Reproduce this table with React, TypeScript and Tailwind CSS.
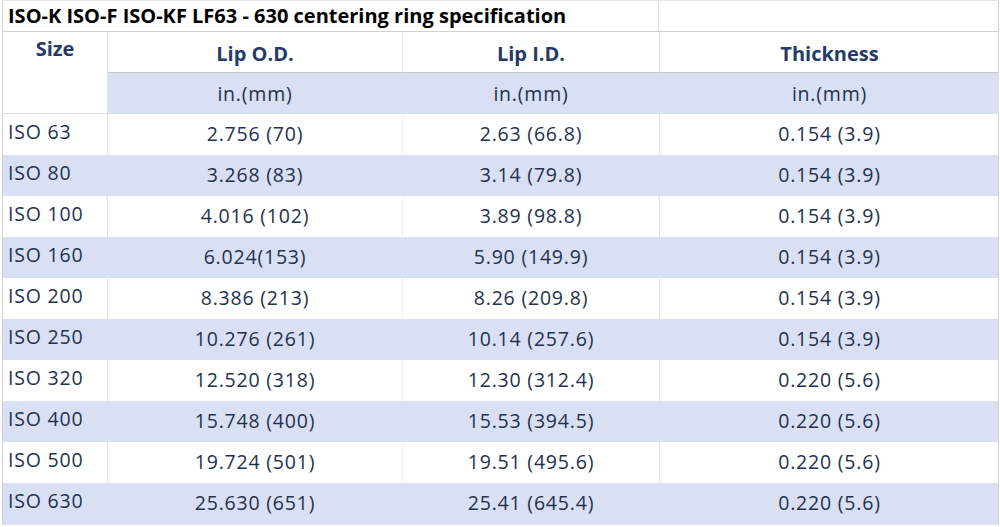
import React from "react";

const rows: [string, string, string, string][] = [
  ["ISO 63", "2.756 (70)", "2.63 (66.8)", "0.154 (3.9)"],
  ["ISO 80", "3.268 (83)", "3.14 (79.8)", "0.154 (3.9)"],
  ["ISO 100", "4.016 (102)", "3.89 (98.8)", "0.154 (3.9)"],
  ["ISO 160", "6.024(153)", "5.90 (149.9)", "0.154 (3.9)"],
  ["ISO 200", "8.386 (213)", "8.26 (209.8)", "0.154 (3.9)"],
  ["ISO 250", "10.276 (261)", "10.14 (257.6)", "0.154 (3.9)"],
  ["ISO 320", "12.520 (318)", "12.30 (312.4)", "0.220 (5.6)"],
  ["ISO 400", "15.748 (400)", "15.53 (394.5)", "0.220 (5.6)"],
  ["ISO 500", "19.724 (501)", "19.51 (495.6)", "0.220 (5.6)"],
  ["ISO 630", "25.630 (651)", "25.41 (645.4)", "0.220 (5.6)"],
];

export default function App() {
  return (
    <div
      className="w-[1000px] h-[527px] bg-white overflow-hidden text-[#23324f]"
      style={{ fontFamily: '"Open Sans", "Noto Sans", Arial, sans-serif' }}
    >
      <div className="ml-[2px] w-[997px] border-l border-r border-[#d4d4d4]">
        {/* title */}
        <div className="grid grid-cols-[655px_341px] h-[32px] border-t border-[#e6e6e6] border-b border-b-[#d0d0d0]">
          <div className="pl-[5px] text-[20px] font-bold text-black leading-[30px] whitespace-nowrap">
            ISO-K ISO-F ISO-KF LF63 - 630 centering ring specification
          </div>
          <div className="border-l border-[#e0e0e0]" />
        </div>
        {/* header */}
        <div className="grid grid-cols-[104px_295px_257px_340px]">
          <div className="row-span-2 h-[82px] border-b border-[#e0e0e0] flex justify-center pt-[4px] text-[20px] font-bold text-[#243b6a] leading-[26px]">
            Size
          </div>
          <div className="h-[41px] border-l border-[#e0e0e0] border-b border-b-[#c4c8d0] flex items-center justify-center pt-[3px] text-[20px] font-bold text-[#243b6a]">
            Lip O.D.
          </div>
          <div className="h-[41px] border-l border-[#ececec] border-b border-b-[#c4c8d0] flex items-center justify-center pt-[3px] text-[20px] font-bold text-[#243b6a]">
            Lip I.D.
          </div>
          <div className="h-[41px] border-l border-[#e0e0e0] border-b border-b-[#c4c8d0] flex items-center justify-center pt-[3px] text-[20px] font-bold text-[#243b6a]">
            Thickness
          </div>
          <div className="h-[41px] bg-[#d9e0f3] border-l border-[#e0e0e0] flex items-center justify-center text-[19.5px] tracking-[0.8px]">
            in.(mm)
          </div>
          <div className="h-[41px] bg-[#d9e0f3] border-l border-[#d9e0f3] flex items-center justify-center text-[19.5px] tracking-[0.8px]">
            in.(mm)
          </div>
          <div className="h-[41px] bg-[#d9e0f3] border-l border-[#d9e0f3] flex items-center justify-center text-[19.5px] tracking-[0.8px]">
            in.(mm)
          </div>
        </div>
        {/* data */}
        {rows.map((r, i) => {
          const blue = i % 2 === 1;
          return (
            <div
              key={r[0]}
              className={
                blue
                  ? "grid grid-cols-[104px_295px_257px_340px] h-[41px] bg-[#d9e0f3] text-[19.5px] tracking-[0.8px]"
                  : "grid grid-cols-[104px_295px_257px_340px] h-[41px] bg-white text-[19.5px] tracking-[0.8px]"
              }
            >
              <div className="pl-[5px] flex items-center pb-[6px] whitespace-nowrap">{r[0]}</div>
              <div className={blue ? "flex items-center justify-center pb-[1px] border-l border-[#d9e0f3]" : "flex items-center justify-center pb-[1px] border-l border-[#e4e4e4]"}>
                {r[1]}
              </div>
              <div className={blue ? "flex items-center justify-center pb-[1px] border-l border-[#d9e0f3]" : "flex items-center justify-center pb-[1px] border-l border-[#efefef]"}>
                {r[2]}
              </div>
              <div className={blue ? "flex items-center justify-center pb-[1px] border-l border-[#d9e0f3]" : "flex items-center justify-center pb-[1px] border-l border-[#e4e4e4]"}>
                {r[3]}
              </div>
            </div>
          );
        })}
        <div className="h-px bg-[#e4e4e4]" />
      </div>
    </div>
  );
}
